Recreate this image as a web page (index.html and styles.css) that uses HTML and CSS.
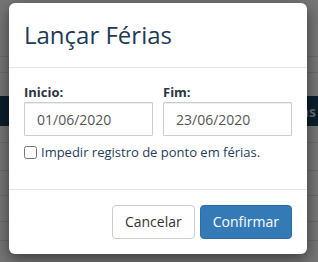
FILE: index.html
```html
<!DOCTYPE html>
<html lang="pt-BR">

<head>
    <meta charset="UTF-8">
    <meta name="viewport" content="width=device-width, initial-scale=1.0">
    <title>Lançar Férias</title>
    <link rel="stylesheet" href="styles.css">
</head>

<body>
    <div class="page">
        <div class="row r1"></div>
        <div class="row r2"></div>
        <div class="row r3"></div>
        <div class="navbar"><span>Férias</span></div>
        <div class="row r4"></div>
        <div class="row r5"></div>
        <div class="row r6"></div>
        <div class="row r7"></div>
        <div class="row r8"></div>
    </div>

    <div class="modal">
        <div class="modal-header">
            <h4 class="modal-title">Lançar Férias</h4>
        </div>
        <div class="modal-body">
            <div class="dates">
                <div class="field">
                    <label>Inicio:</label>
                    <input type="text" value="01/06/2020">
                </div>
                <div class="field">
                    <label>Fim:</label>
                    <input type="text" value="23/06/2020">
                </div>
            </div>
            <label class="check">
                <input type="checkbox">
                <span>Impedir registro de ponto em férias.</span>
            </label>
        </div>
        <div class="modal-footer">
            <button class="btn">Cancelar</button>
            <button class="btn btn-primary">Confirmar</button>
        </div>
    </div>
</body>

</html>
```

FILE: styles.css
```css
html,
body {
    margin: 0;
    height: 100%;
}

body {
    background: #767676;
    font-family: "Open Sans", "Liberation Sans", sans-serif;
    overflow: hidden;
}

/* page behind the backdrop */
.page {
    display: flex;
    flex-direction: column;
}

.row {
    border-bottom: 1px solid #6a6a6a;
}

.r1 { height: 56px; }
.r2 { height: 15px; }
.r3 { height: 23px; border-bottom: 0; }
.r4 { height: 16px; }
.r5 { height: 27px; }
.r6 { height: 24px; }
.r7 { height: 25px; }
.r8 { height: 18px; }

.navbar {
    height: 30px;
    background: #0a1f2c;
    display: flex;
    align-items: center;
    justify-content: flex-end;
}

.navbar span {
    color: #5f6e78;
    font-size: 14px;
    font-weight: bold;
    margin-right: 2px;
}

/* modal */
.modal {
    position: absolute;
    left: 9px;
    top: 3px;
    width: 298px;
    background: #fff;
    border-radius: 6px;
    box-shadow: 0 5px 15px rgba(0, 0, 0, .5);
}

.modal-header {
    padding: 19px 15px 19px;
    border-bottom: 1px solid #e5e5e5;
}

.modal-title {
    margin: 0;
    font-size: 24px;
    font-weight: normal;
    line-height: 1.1;
    color: #1d3a57;
}

.modal-body {
    padding: 14px 15px 15px;
    border-bottom: 1px solid #e5e5e5;
}

.dates {
    display: flex;
    gap: 10px;
}

.field {
    flex: 1;
    display: flex;
    flex-direction: column;
}

.field label {
    font-size: 13px;
    font-weight: bold;
    line-height: 20px;
    color: #2b3540;
}

.field input {
    height: 34px;
    box-sizing: border-box;
    width: 100%;
    padding: 6px 12px;
    font-family: inherit;
    font-size: 14px;
    color: #555;
    border: 1px solid #ccc;
    border-radius: 1px;
    box-shadow: inset 0 1px 1px rgba(0, 0, 0, .075);
    outline: none;
}

.check {
    display: flex;
    align-items: center;
    margin: 6px 0 12px;
    font-size: 13px;
    line-height: 20px;
    color: #1f3d5c;
}

.check input {
    margin: 0 4px 0 0;
    width: 13px;
    height: 13px;
}

.modal-footer {
    padding: 15px;
    display: flex;
    justify-content: flex-end;
    gap: 5px;
}

.btn {
    height: 34px;
    padding: 6px 12px;
    font-family: inherit;
    font-size: 14px;
    line-height: 20px;
    color: #333;
    background: #fff;
    border: 1px solid #ccc;
    border-radius: 4px;
}

.btn-primary {
    color: #fff;
    background: #337ab7;
    border-color: #2e6da4;
}
```
